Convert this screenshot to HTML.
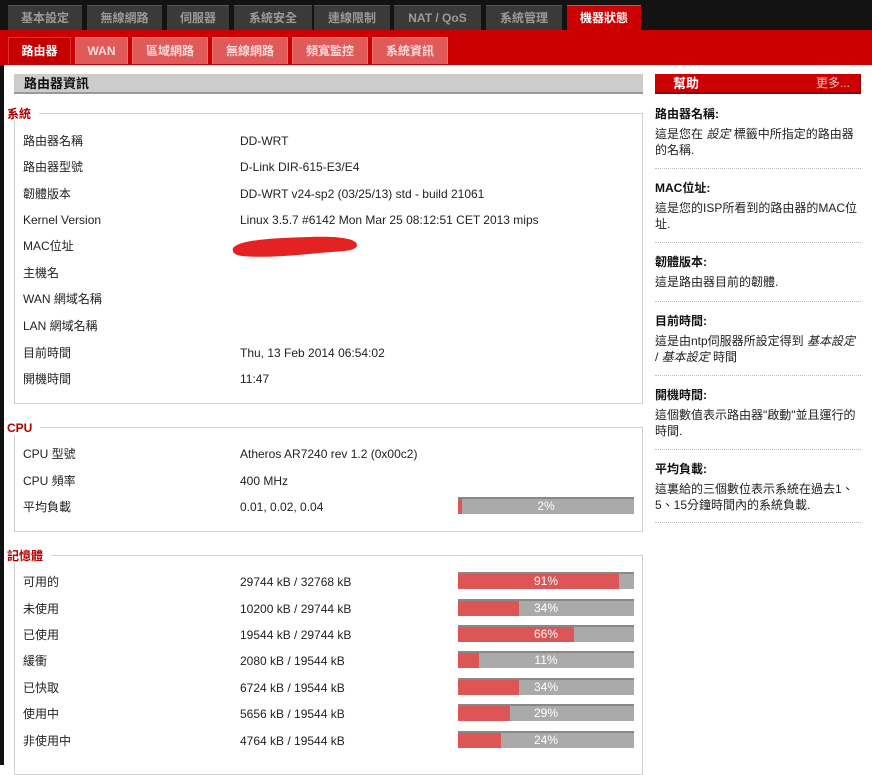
<!DOCTYPE html>
<html><head><meta charset="utf-8"><style>
*{margin:0;padding:0;box-sizing:border-box}
body{width:872px;height:765px;overflow:hidden;background:#fff;font-family:"Liberation Sans","Noto Sans CJK TC",sans-serif;font-size:12px;color:#222;position:relative}
.a{position:absolute}
#top{left:0;top:0;width:872px;height:31px;background:#131313}
.t{position:absolute;top:5px;height:26px;background:#3a3a3a;color:#9a9a9a;font-weight:bold;font-size:12px;text-align:center;line-height:25px;border-top:1px solid #555}
.t.on{background:#cc0000;color:#fff;border-top:1px solid #e44}
#red{left:0;top:30px;width:872px;height:35px;background:#cc0000}
.s{position:absolute;top:37px;height:27px;background:#e05a5a;color:#fbdada;font-weight:bold;font-size:12px;text-align:center;line-height:26px;border:1px solid #e87a7a;border-bottom:none}
.s.on{background:#c40000;color:#fff;border-color:#d33}
#lb{left:0;top:65px;width:4px;height:700px;background:#111}
.hdr{position:absolute;top:74px;height:20px;background:#ccc;border-bottom:2px solid #999;font-weight:bold;font-size:13px;line-height:19px;padding-left:10px;color:#111}
.box{position:absolute;left:14px;width:629px;border:1px solid #d0d0d0;background:#fff}
.lg{position:absolute;left:7px;background:#fff;color:#b00000;font-weight:bold;font-size:12px;padding-right:8px;line-height:14px}
.r{position:absolute;font-size:12px;color:#222;line-height:14px}
.bar{position:absolute;left:458px;width:176px;height:17px;background:#aaa;border-top:2px solid #888;color:#fff;font-size:12px;text-align:center;line-height:15px}
.bar i{position:absolute;left:0;top:0;height:15px;background:#dd5555}
.bar span{position:relative}
.help{position:absolute;left:655px;width:206px}
.h1{font-weight:bold;font-size:12px;color:#111;line-height:14px}
.hp{font-size:12px;line-height:16px;color:#222;margin-top:5px}
.hs{position:absolute;left:655px;width:206px;border-top:1px dotted #bbb}
</style></head><body>
<div id="top" class="a"></div>
<div class="t" style="left:8px;width:74px">基本設定</div>
<div class="t" style="left:87px;width:75px">無線網路</div>
<div class="t" style="left:167px;width:62px">伺服器</div>
<div class="t" style="left:234px;width:78px">系統安全</div>
<div class="t" style="left:314px;width:76px">連線限制</div>
<div class="t" style="left:394px;width:87px">NAT / QoS</div>
<div class="t" style="left:486px;width:76px">系統管理</div>
<div id="red" class="a"></div>
<div class="t on" style="left:567px;width:74px;height:27px">機器狀態</div>
<div class="s on" style="left:8px;width:63px">路由器</div>
<div class="s" style="left:75px;width:53px">WAN</div>
<div class="s" style="left:132px;width:76px">區域網路</div>
<div class="s" style="left:212px;width:76px">無線網路</div>
<div class="s" style="left:292px;width:76px">頻寬監控</div>
<div class="s" style="left:372px;width:76px">系統資訊</div>
<div id="lb" class="a"></div>

<div class="hdr" style="left:14px;width:629px">路由器資訊</div>
<div class="hdr" style="left:655px;width:206px;background:#cc0000;color:#fff;border-bottom:2px solid #900;border-right:1px solid #900;padding-left:18px">幫助<span style="position:absolute;right:10px;font-weight:normal;color:#f3c0c0;font-size:12px">更多...</span></div>

<div class="box" style="top:113px;height:291px"></div>
<div class="lg" style="top:107px">系統</div>
<div class="r" style="left:23px;top:134px">路由器名稱</div><div class="r" style="left:240px;top:134px">DD-WRT</div>
<div class="r" style="left:23px;top:160px">路由器型號</div><div class="r" style="left:240px;top:160px">D-Link DIR-615-E3/E4</div>
<div class="r" style="left:23px;top:187px">韌體版本</div><div class="r" style="left:240px;top:187px">DD-WRT v24-sp2 (03/25/13) std - build 21061</div>
<div class="r" style="left:23px;top:213px">Kernel Version</div><div class="r" style="left:240px;top:213px">Linux 3.5.7 #6142 Mon Mar 25 08:12:51 CET 2013 mips</div>
<div class="r" style="left:23px;top:239px">MAC位址</div>
<svg class="a" style="left:230px;top:234px" width="132" height="26"><path d="M3 14 C10 6,40 4,80 3 C110 2,127 5,127 11 C127 18,108 17,90 19 C60 22,30 24,12 22 C4 21,2 18,3 14 Z" fill="#e52222"/></svg>
<div class="r" style="left:23px;top:266px">主機名</div>
<div class="r" style="left:23px;top:292px">WAN 網域名稱</div>
<div class="r" style="left:23px;top:319px">LAN 網域名稱</div>
<div class="r" style="left:23px;top:346px">目前時間</div><div class="r" style="left:240px;top:346px">Thu, 13 Feb 2014 06:54:02</div>
<div class="r" style="left:23px;top:372px">開機時間</div><div class="r" style="left:240px;top:372px">11:47</div>

<div class="box" style="top:427px;height:105px"></div>
<div class="lg" style="top:421px">CPU</div>
<div class="r" style="left:23px;top:447px">CPU 型號</div><div class="r" style="left:240px;top:447px">Atheros AR7240 rev 1.2 (0x00c2)</div>
<div class="r" style="left:23px;top:474px">CPU 頻率</div><div class="r" style="left:240px;top:474px">400 MHz</div>
<div class="r" style="left:23px;top:500px">平均負載</div><div class="r" style="left:240px;top:500px">0.01, 0.02, 0.04</div>
<div class="bar" style="top:497px"><i style="width:4px"></i><span>2%</span></div>

<div class="box" style="top:555px;height:220px"></div>
<div class="lg" style="top:549px">記憶體</div>
<div class="r" style="left:23px;top:575px">可用的</div><div class="r" style="left:240px;top:575px">29744 kB / 32768 kB</div>
<div class="bar" style="top:572px"><i style="width:161px"></i><span>91%</span></div>
<div class="r" style="left:23px;top:602px">未使用</div><div class="r" style="left:240px;top:602px">10200 kB / 29744 kB</div>
<div class="bar" style="top:599px"><i style="width:61px"></i><span>34%</span></div>
<div class="r" style="left:23px;top:628px">已使用</div><div class="r" style="left:240px;top:628px">19544 kB / 29744 kB</div>
<div class="bar" style="top:625px"><i style="width:116px"></i><span>66%</span></div>
<div class="r" style="left:23px;top:654px">緩衝</div><div class="r" style="left:240px;top:654px">2080 kB / 19544 kB</div>
<div class="bar" style="top:651px"><i style="width:21px"></i><span>11%</span></div>
<div class="r" style="left:23px;top:681px">已快取</div><div class="r" style="left:240px;top:681px">6724 kB / 19544 kB</div>
<div class="bar" style="top:678px"><i style="width:61px"></i><span>34%</span></div>
<div class="r" style="left:23px;top:707px">使用中</div><div class="r" style="left:240px;top:707px">5656 kB / 19544 kB</div>
<div class="bar" style="top:704px"><i style="width:52px"></i><span>29%</span></div>
<div class="r" style="left:23px;top:734px">非使用中</div><div class="r" style="left:240px;top:734px">4764 kB / 19544 kB</div>
<div class="bar" style="top:731px"><i style="width:43px"></i><span>24%</span></div>

<div class="help" style="top:107px"><div class="h1">路由器名稱:</div><div class="hp">這是您在 <i>設定</i> 標籤中所指定的路由器的名稱.</div></div>
<div class="hs" style="top:168px"></div>
<div class="help" style="top:181px"><div class="h1">MAC位址:</div><div class="hp">這是您的ISP所看到的路由器的MAC位址.</div></div>
<div class="hs" style="top:242px"></div>
<div class="help" style="top:255px"><div class="h1">韌體版本:</div><div class="hp">這是路由器目前的韌體.</div></div>
<div class="hs" style="top:301px"></div>
<div class="help" style="top:314px"><div class="h1">目前時間:</div><div class="hp">這是由ntp伺服器所設定得到 <i>基本設定</i> / <i>基本設定</i> 時間</div></div>
<div class="hs" style="top:375px"></div>
<div class="help" style="top:388px"><div class="h1">開機時間:</div><div class="hp">這個數值表示路由器"啟動"並且運行的時間.</div></div>
<div class="hs" style="top:449px"></div>
<div class="help" style="top:462px"><div class="h1">平均負載:</div><div class="hp">這裏給的三個數位表示系統在過去1、5、15分鐘時間內的系統負載.</div></div>
<div class="hs" style="top:522px"></div>
</body></html>
